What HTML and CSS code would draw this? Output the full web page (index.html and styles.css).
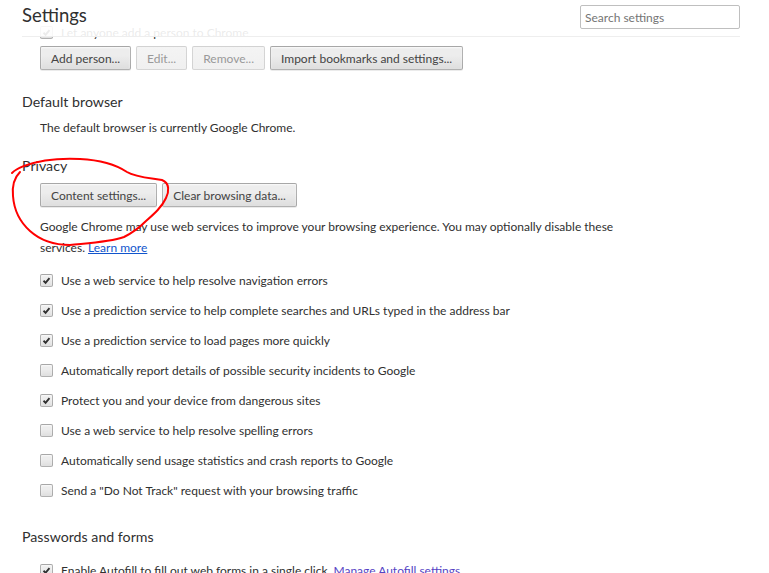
FILE: index.html
```html
<!DOCTYPE html>
<html lang="en">
<head>
    <meta charset="UTF-8">
    <title>Settings</title>
    <link rel="stylesheet" href="styles.css">
</head>
<body>
    <div class="main">
        <div class="check-row top-row">
            <span class="checkbox checked"><svg viewBox="0 0 13 13"><path d="M3 6.8 L5.4 9.2 L10 3.6"/></svg></span>
            <span>Let anyone add a person to Chrome</span>
        </div>
        <div class="btn-row">
            <button class="btn">Add person...</button>
            <button class="btn" disabled>Edit...</button>
            <button class="btn" disabled>Remove...</button>
            <button class="btn">Import bookmarks and settings...</button>
        </div>

        <section class="section">
            <h3>Default browser</h3>
            <div class="section-body">
                <p class="plain">The default browser is currently Google Chrome.</p>
            </div>
        </section>

        <section class="section privacy">
            <h3>Privacy</h3>
            <div class="section-body">
                <div class="btn-row">
                    <button class="btn">Content settings...</button>
                    <button class="btn">Clear browsing data...</button>
                </div>
                <p class="note">Google Chrome may use web services to improve your browsing experience. You may optionally disable these services. <a href="#">Learn more</a></p>
                <div class="check-list">
                    <div class="check-row">
                        <span class="checkbox checked"><svg viewBox="0 0 13 13"><path d="M3 6.8 L5.4 9.2 L10 3.6"/></svg></span>
                        <span>Use a web service to help resolve navigation errors</span>
                    </div>
                    <div class="check-row">
                        <span class="checkbox checked"><svg viewBox="0 0 13 13"><path d="M3 6.8 L5.4 9.2 L10 3.6"/></svg></span>
                        <span>Use a prediction service to help complete searches and URLs typed in the address bar</span>
                    </div>
                    <div class="check-row">
                        <span class="checkbox checked"><svg viewBox="0 0 13 13"><path d="M3 6.8 L5.4 9.2 L10 3.6"/></svg></span>
                        <span>Use a prediction service to load pages more quickly</span>
                    </div>
                    <div class="check-row">
                        <span class="checkbox"></span>
                        <span>Automatically report details of possible security incidents to Google</span>
                    </div>
                    <div class="check-row">
                        <span class="checkbox checked"><svg viewBox="0 0 13 13"><path d="M3 6.8 L5.4 9.2 L10 3.6"/></svg></span>
                        <span>Protect you and your device from dangerous sites</span>
                    </div>
                    <div class="check-row">
                        <span class="checkbox"></span>
                        <span>Use a web service to help resolve spelling errors</span>
                    </div>
                    <div class="check-row">
                        <span class="checkbox"></span>
                        <span>Automatically send usage statistics and crash reports to Google</span>
                    </div>
                    <div class="check-row">
                        <span class="checkbox"></span>
                        <span>Send a "Do Not Track" request with your browsing traffic</span>
                    </div>
                </div>
            </div>
        </section>

        <section class="section passwords">
            <h3>Passwords and forms</h3>
            <div class="section-body">
                <div class="check-row">
                    <span class="checkbox checked"><svg viewBox="0 0 13 13"><path d="M3 6.8 L5.4 9.2 L10 3.6"/></svg></span>
                    <span>Enable Autofill to fill out web forms in a single click. <a href="#" class="manage">Manage Autofill settings</a></span>
                </div>
            </div>
        </section>
    </div>

    <header class="page-header">
        <div class="header-inner">
            <h1>Settings</h1>
            <input type="text" class="search" placeholder="Search settings">
        </div>
    </header>

    <!-- red marker scribble from the screenshot -->
    <svg class="scribble" width="769" height="573" viewBox="0 0 769 573">
        <path d="M12 173 C16 169 19 168 24 166 C40 160 60 158 80 159 C100 160 115 164 127 172 C135 177 150 178 162 180 C170 183 169 192 166 198 C162 207 154 214 146 221 C140 227 134 232 124 237 C110 242 90 243 70 245 C52 245 40 240 30 231 C20 222 14 210 13 196 C12 186 14 178 20 172"/>
    </svg>
</body>
</html>
```

FILE: styles.css
```css
* {
    margin: 0;
    padding: 0;
    box-sizing: border-box;
}

body {
    font-family: Lato, "Liberation Sans", sans-serif;
    font-size: 12px;
    color: #303030;
    background: white;
    width: 769px;
    height: 573px;
    overflow: hidden;
    position: relative;
}

.page-header {
    position: absolute;
    top: 0;
    left: 0;
    right: 0;
    height: 37px;
    background: rgba(255, 255, 255, 0.9);
}

.header-inner {
    margin-left: 22px;
    width: 718px;
    height: 37px;
    border-bottom: 1px solid #eee;
    display: flex;
    justify-content: space-between;
    align-items: flex-start;
}

.header-inner h1 {
    font-size: 18.5px;
    font-weight: normal;
    color: #303030;
    line-height: 24px;
    margin-top: 3px;
}

.search {
    width: 160px;
    height: 24px;
    margin-top: 5px;
    border: 1px solid #bfbfbf;
    border-radius: 2px;
    padding: 0 4px;
    font-family: Lato, "Liberation Sans", sans-serif;
    font-size: 12px;
    color: #303030;
}

.search::placeholder {
    color: #757575;
}

.main {
    padding: 18px 0 0 22px;
}

.main .top-row {
    height: 28px;
    margin-left: 18px;
}

.top-row + .btn-row {
    margin-left: 18px;
}

.btn-row {
    display: flex;
    gap: 5px;
}

.btn {
    height: 24px;
    padding: 0 10px;
    font-family: Lato, "Liberation Sans", sans-serif;
    font-size: 12px;
    color: #444;
    border: 1px solid rgba(0, 0, 0, 0.25);
    border-radius: 2px;
    background: linear-gradient(#ededed, #ededed 38%, #dedede);
    box-shadow: 0 1px 0 rgba(0, 0, 0, 0.08), inset 0 1px 2px rgba(255, 255, 255, 0.75);
}

.btn:disabled {
    color: #999;
    border-color: rgba(0, 0, 0, 0.12);
    background: linear-gradient(#f4f4f4, #f0f0f0);
    box-shadow: none;
}

.section h3 {
    font-size: 14.2px;
    font-weight: normal;
    color: #303030;
    line-height: 20px;
}

.section {
    margin-top: 22px;
}

.privacy {
    margin-top: 18px;
}

.section-body {
    margin-left: 18px;
}

.plain {
    line-height: 20px;
    margin-top: 6px;
}

.privacy .btn-row {
    margin-top: 7px;
}

.note {
    line-height: 21px;
    margin-top: 9px;
    max-width: 590px;
}

.note a {
    color: #15c;
}

.check-list {
    margin-top: 7px;
}

.check-row {
    display: flex;
    align-items: center;
    gap: 8px;
    height: 30px;
}

.checkbox {
    width: 13px;
    height: 13px;
    flex-shrink: 0;
    border: 1px solid rgba(0, 0, 0, 0.25);
    border-radius: 2px;
    background: linear-gradient(#ededed, #ededed 38%, #dedede);
    box-shadow: inset 0 1px 2px rgba(255, 255, 255, 0.75);
    display: flex;
}

.checkbox svg {
    width: 11px;
    height: 11px;
}

.checkbox svg path {
    fill: none;
    stroke: #303030;
    stroke-width: 2.2;
}

.passwords .section-body {
    margin-top: 8px;
}

.manage {
    color: #5543c4;
    text-decoration: none;
}

.scribble {
    position: absolute;
    top: 0;
    left: 0;
    pointer-events: none;
}

.scribble path {
    fill: none;
    stroke: #f00;
    stroke-width: 2;
    stroke-linecap: round;
}
```
